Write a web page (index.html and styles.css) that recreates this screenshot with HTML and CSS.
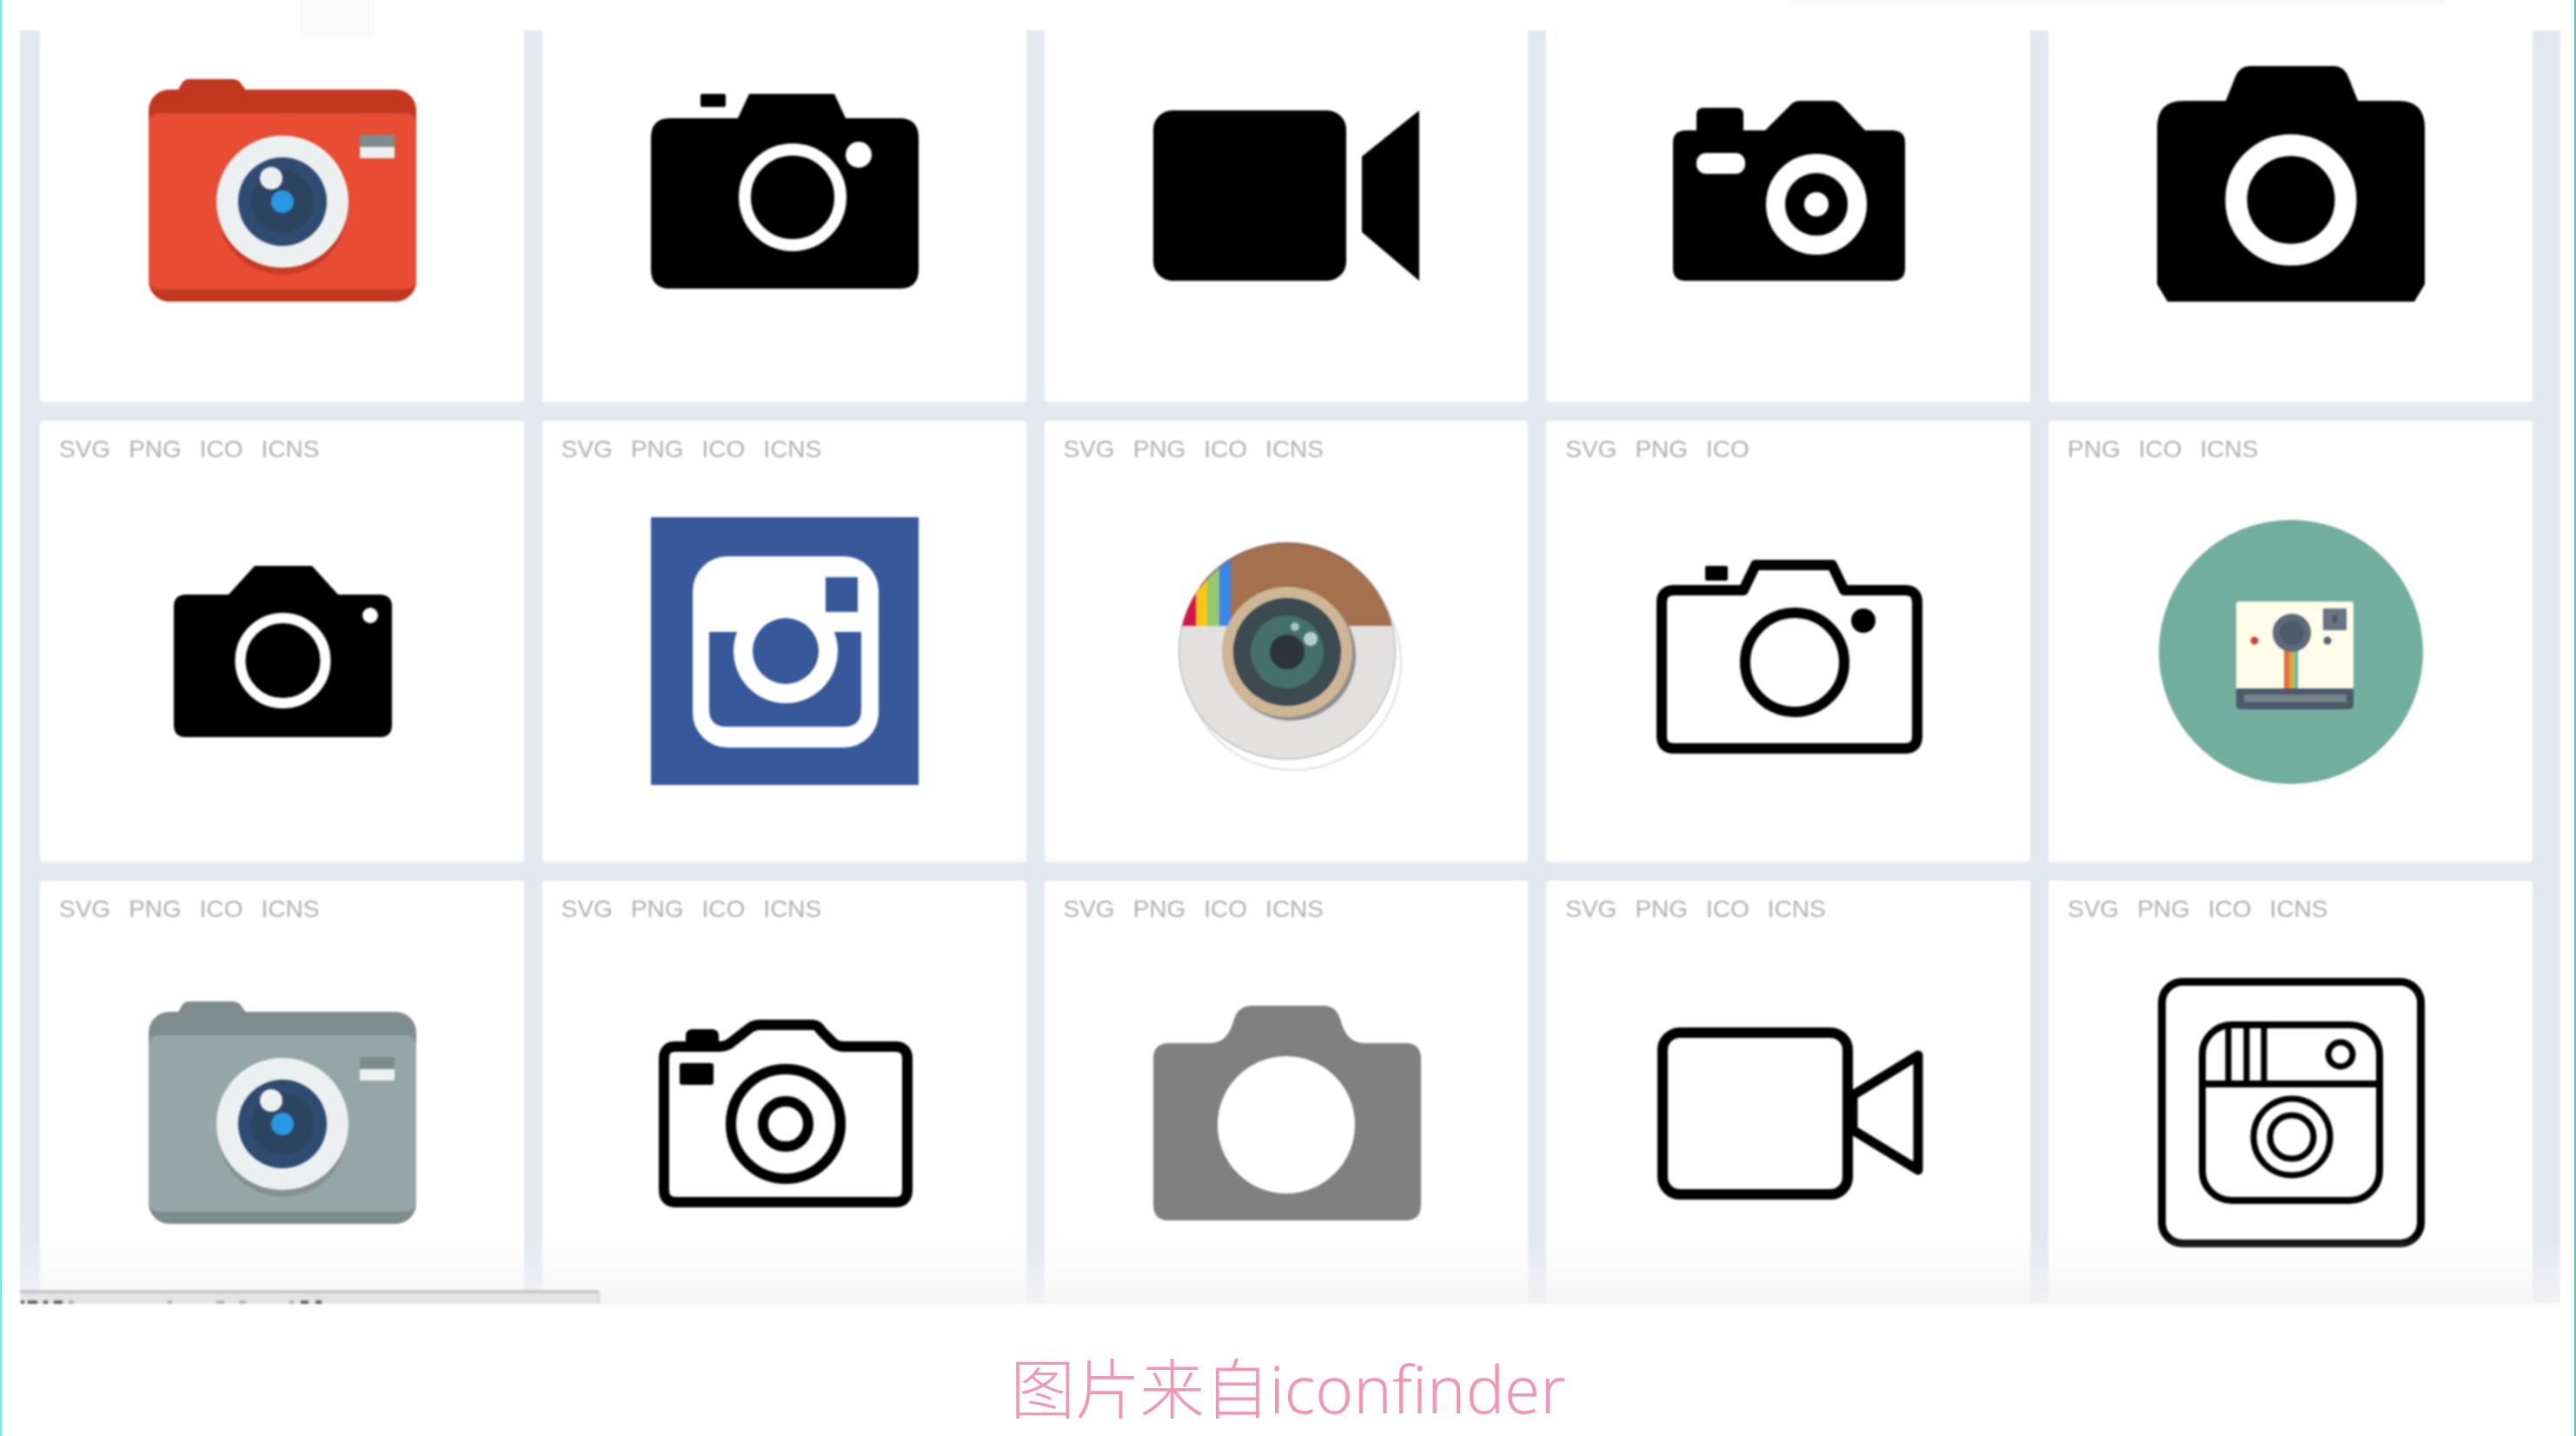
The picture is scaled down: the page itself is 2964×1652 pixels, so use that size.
FILE: index.html
```html
<!DOCTYPE html>
<html lang="zh">
<head>
<meta charset="utf-8">
<title>iconfinder</title>
<link rel="stylesheet" href="styles.css">
</head>
<body>
<div class="page">
  <div class="top-strip"><span class="ghost-tab"></span><span class="ghost-bar"></span></div>
  <div class="sheet">
    <div class="grid">

      <div class="card card--top">
        <svg class="icon" viewBox="0 0 308 308">
          <path d="M30 44 38 29Q41 24 47 24H96Q104 24 107 30L113 38V44Z" fill="#c2371f"/>
          <rect x="0" y="36" width="308" height="244" rx="24" fill="#c2371f"/>
          <rect x="0" y="63" width="308" height="203" rx="12" fill="#e84c33"/>
          <circle cx="154" cy="175" r="74" fill="#c63c26"/>
          <circle cx="154" cy="165" r="76" fill="#ecf0f1"/>
          <circle cx="154" cy="165" r="51" fill="#2f4b70"/>
          <circle cx="154" cy="165" r="36" fill="#2c4460"/>
          <circle cx="154" cy="165" r="13" fill="#2a97e2"/>
          <circle cx="141" cy="138" r="13" fill="#ecf0f1"/>
          <rect x="243" y="88" width="40" height="14" fill="#7f8c8d"/>
          <rect x="243" y="102" width="40" height="13" fill="#ecf0f1"/>
        </svg>
      </div>

      <div class="card card--top">
        <svg class="icon" viewBox="0 0 308 308">
          <path d="M113 41H211L224 69H286Q308 69 308 92V243Q308 265 286 265H22Q0 265 0 243V92Q0 69 22 69H100Z" fill="#000"/>
          <rect x="57" y="41" width="29" height="15" rx="2" fill="#000"/>
          <circle cx="163" cy="160" r="55" fill="none" stroke="#fff" stroke-width="14"/>
          <circle cx="239" cy="111" r="15" fill="#fff"/>
        </svg>
      </div>

      <div class="card card--top">
        <svg class="icon" viewBox="0 0 308 308">
          <rect x="0" y="60" width="222" height="196" rx="22" fill="#000"/>
          <path d="M306 60V256L240 200V113Z" fill="#000"/>
        </svg>
      </div>

      <div class="card card--top">
        <svg class="icon" viewBox="0 0 308 308">
          <path d="M47 65Q47 57 55 57H93Q101 57 101 65V83H126L156 53Q160 49 166 49H203Q209 49 213 53L241 83H272Q287 83 287 97V242Q287 256 272 256H35Q20 256 20 242V97Q20 83 35 83H47Z" fill="#000"/>
          <rect x="47" y="109" width="56" height="24" rx="11" fill="#fff"/>
          <circle cx="185" cy="168" r="47" fill="none" stroke="#fff" stroke-width="22"/>
          <circle cx="185" cy="168" r="14" fill="#fff"/>
        </svg>
      </div>

      <div class="card card--top">
        <svg class="icon" viewBox="0 0 308 308">
          <path d="M107 9H203Q216 9 221 24L231 49H278Q308 49 308 80V260L296 280H12L0 260V80Q0 49 30 49H79L89 24Q94 9 107 9Z" fill="#000"/>
          <circle cx="154" cy="163" r="63" fill="none" stroke="#fff" stroke-width="25"/>
        </svg>
      </div>

      <div class="card">
        <div class="formats"><span>SVG</span><span>PNG</span><span>ICO</span><span>ICNS</span></div>
        <svg class="icon" viewBox="0 0 308 308">
          <path d="M122 56H188L218 89H266Q280 89 280 103V239Q280 253 266 253H43Q29 253 29 239V103Q29 89 43 89H92Z" fill="#000"/>
          <circle cx="154.500" cy="165" r="49" fill="none" stroke="#fff" stroke-width="12"/>
          <circle cx="255" cy="113" r="9" fill="#fff"/>
        </svg>
      </div>

      <div class="card">
        <div class="formats"><span>SVG</span><span>PNG</span><span>ICO</span><span>ICNS</span></div>
        <svg class="icon" viewBox="0 0 308 308">
          <rect width="308" height="308" fill="#37589b"/>
          <rect x="48" y="45" width="214" height="220" rx="40" fill="#fff"/>
          <path d="M67 132H242V221Q242 241 222 241H87Q67 241 67 221Z" fill="#37589b"/>
          <rect x="201" y="69" width="37" height="40" fill="#37589b"/>
          <circle cx="155" cy="154" r="60" fill="#fff"/>
          <circle cx="155" cy="154" r="38" fill="#37589b"/>
        </svg>
      </div>

      <div class="card">
        <div class="formats"><span>SVG</span><span>PNG</span><span>ICO</span><span>ICNS</span></div>
        <svg class="icon" viewBox="0 0 308 308">
          <defs>
            <clipPath id="insta-disc"><circle cx="154" cy="154" r="124"/></clipPath>
          </defs>
          <circle cx="161" cy="167" r="124" fill="#fff" stroke="#dedede" stroke-width="2"/>
          <circle cx="154" cy="154" r="125" fill="#a8a8a8"/>
          <g clip-path="url(#insta-disc)">
            <rect x="30" y="30" width="248" height="95" fill="#a4704e"/>
            <rect x="30" y="30" width="19" height="95" fill="#d8124e"/>
            <rect x="49" y="30" width="13" height="95" fill="#fcc414"/>
            <rect x="62" y="30" width="14" height="95" fill="#94c96f"/>
            <rect x="76" y="30" width="13" height="95" fill="#3b86ec"/>
            <rect x="30" y="125" width="248" height="153" fill="#e2e1df"/>
          </g>
          <path d="M54 80A124 124 0 0 1 230 56" fill="none" stroke="#7d5238" stroke-width="2" opacity="0.6"/>
          <circle cx="158" cy="159" r="75" fill="#8e8e8e"/>
          <circle cx="154" cy="155" r="75" fill="#cdb595"/>
          <circle cx="154" cy="155" r="62" fill="#3c4a52"/>
          <circle cx="154" cy="155" r="42" fill="#45706e"/>
          <circle cx="154" cy="155" r="20" fill="#2b343b"/>
          <circle cx="163" cy="126" r="5" fill="#a9c4c0"/>
          <circle cx="181" cy="140" r="8" fill="#b5cfcb"/>
        </svg>
      </div>

      <div class="card">
        <div class="formats"><span>SVG</span><span>PNG</span><span>ICO</span></div>
        <svg class="icon" viewBox="0 0 308 308">
          <path d="M115 55H203L217 84H287Q301 84 301 98V252Q301 266 287 266H21Q7 266 7 252V98Q7 84 21 84H101Z" fill="none" stroke="#000" stroke-width="12" stroke-linejoin="round"/>
          <rect x="57" y="56" width="26" height="17" rx="2" fill="#000"/>
          <circle cx="160" cy="167" r="57" fill="none" stroke="#000" stroke-width="12"/>
          <circle cx="239" cy="119" r="14" fill="#000"/>
        </svg>
      </div>

      <div class="card">
        <div class="formats"><span>PNG</span><span>ICO</span><span>ICNS</span></div>
        <svg class="icon" viewBox="0 0 308 308">
          <circle cx="154" cy="155" r="152" fill="#72ae9d"/>
          <path d="M91 100Q91 97 94 97H223Q226 97 226 100V197H91Z" fill="#fdfce8"/>
          <path d="M91 197H226V216Q226 221 221 221H96Q91 221 91 216Z" fill="#4d5869"/>
          <rect x="100" y="204" width="118" height="9" fill="#76838a"/>
          <rect x="146" y="150" width="6" height="47" fill="#e0704a"/>
          <rect x="152" y="150" width="4" height="47" fill="#e8a030"/>
          <rect x="156" y="150" width="3" height="47" fill="#a9c060"/>
          <rect x="159" y="150" width="3" height="47" fill="#5fb0b0"/>
          <circle cx="155" cy="133" r="22" fill="#5c6b7a"/>
          <circle cx="155" cy="133" r="14" fill="#4d5a6c"/>
          <rect x="191" y="105" width="27" height="25" fill="#6a7480"/>
          <rect x="202" y="113" width="5" height="8" fill="#49525f"/>
          <circle cx="112" cy="142" r="4.500" fill="#c9432e"/>
          <circle cx="196" cy="142" r="4.500" fill="#55607a"/>
        </svg>
      </div>

      <div class="card">
        <div class="formats"><span>SVG</span><span>PNG</span><span>ICO</span><span>ICNS</span></div>
        <svg class="icon" viewBox="0 0 308 308">
          <path d="M30 48 38 33Q41 28 47 28H96Q104 28 107 34L113 42V48Z" fill="#7f8c8d"/>
          <rect x="0" y="40" width="308" height="244" rx="24" fill="#7f8c8d"/>
          <rect x="0" y="67" width="308" height="203" rx="12" fill="#96a6a6"/>
          <circle cx="154" cy="179" r="74" fill="#84918f"/>
          <circle cx="154" cy="169" r="76" fill="#ecf0f1"/>
          <circle cx="154" cy="169" r="51" fill="#2f4b70"/>
          <circle cx="154" cy="169" r="36" fill="#2c4460"/>
          <circle cx="154" cy="169" r="13" fill="#2a97e2"/>
          <circle cx="141" cy="142" r="13" fill="#ecf0f1"/>
          <rect x="243" y="92" width="40" height="14" fill="#7f8c8d"/>
          <rect x="243" y="106" width="40" height="13" fill="#ecf0f1"/>
        </svg>
      </div>

      <div class="card">
        <div class="formats"><span>SVG</span><span>PNG</span><span>ICO</span><span>ICNS</span></div>
        <svg class="icon" viewBox="0 0 308 308">
          <path d="M28 80H78Q88 80 94 74L112 60Q118 55 125 55H186Q192 55 196 62L209 75Q214 80 222 80H281Q295 80 295 94V245Q295 259 281 259H29Q15 259 15 245V94Q15 80 28 80Z" fill="none" stroke="#000" stroke-width="12" stroke-linejoin="round"/>
          <path d="M40 80V68Q40 60 48 60H70Q78 60 78 68V80Z" fill="#000"/>
          <rect x="33" y="99" width="39" height="25" rx="3" fill="#000"/>
          <circle cx="155" cy="169" r="63" fill="none" stroke="#000" stroke-width="12"/>
          <circle cx="155" cy="169" r="26" fill="none" stroke="#000" stroke-width="12"/>
        </svg>
      </div>

      <div class="card">
        <div class="formats"><span>SVG</span><span>PNG</span><span>ICO</span><span>ICNS</span></div>
        <svg class="icon" viewBox="0 0 308 308">
          <path d="M114 33H196Q210 33 215 48Q222 76 242 76H290Q308 76 308 94V262Q308 280 290 280H18Q0 280 0 262V94Q0 76 18 76H66Q86 76 93 48Q98 33 114 33Z" fill="#808080"/>
          <circle cx="153" cy="170" r="79" fill="#fff"/>
        </svg>
      </div>

      <div class="card">
        <div class="formats"><span>SVG</span><span>PNG</span><span>ICO</span><span>ICNS</span></div>
        <svg class="icon" viewBox="0 0 308 308">
          <rect x="8" y="64" width="213" height="186" rx="20" fill="none" stroke="#000" stroke-width="12"/>
          <path d="M302 90V222L227 176V136Z" fill="none" stroke="#000" stroke-width="11" stroke-linejoin="round"/>
        </svg>
      </div>

      <div class="card">
        <div class="formats"><span>SVG</span><span>PNG</span><span>ICO</span><span>ICNS</span></div>
        <svg class="icon" viewBox="0 0 308 308">
          <rect x="5.500" y="5.500" width="298" height="301" rx="24" fill="none" stroke="#000" stroke-width="9"/>
          <rect x="52" y="55" width="204" height="202" rx="34" fill="none" stroke="#000" stroke-width="8"/>
          <path d="M52 123H256" fill="none" stroke="#000" stroke-width="8"/>
          <path d="M82 55V123M103 55V123M123 55V123" fill="none" stroke="#000" stroke-width="7"/>
          <circle cx="211" cy="89" r="14" fill="none" stroke="#000" stroke-width="7"/>
          <circle cx="155" cy="184" r="44" fill="none" stroke="#000" stroke-width="7"/>
          <circle cx="155" cy="184" r="25" fill="none" stroke="#000" stroke-width="7"/>
        </svg>
      </div>

    </div>
    <div class="fade"></div>
    <div class="status">
      <svg class="status-marks" width="380" height="4" viewBox="0 0 380 4">
        <path d="M1 0H5V4H1ZM9 0H20V4H9ZM27 0H32V4H27ZM39 0H49V4H39ZM323 0H332V4H323ZM340 0H347V4H340Z" fill="#666"/>
        <path d="M56 0H62V4H56ZM169 0H175V4H169ZM226 0H235V4H226ZM252 0H260V4H252ZM310 0H315V4H310Z" fill="#b4b4b4"/>
      </svg>
    </div>
  </div>
  <div class="caption">图片来自iconfinder</div>
</div>
</body>
</html>
```

FILE: styles.css
```css
* {
  box-sizing: border-box;
}

html,
body {
  margin: 0;
  padding: 0;
  background: #fff;
}

.page {
  position: relative;
  width: 2964px;
  height: 1652px;
  display: flex;
  flex-direction: column;
  overflow: hidden;
  border-left: 2px solid #63f3f3;
  border-right: 2px solid #58c8b8;
}

.top-strip {
  height: 35px;
  flex: none;
}

.ghost-tab {
  position: absolute;
  left: 343px;
  top: 0;
  width: 86px;
  height: 45px;
  background: #fafafa;
  border-radius: 0 0 8px 8px;
  z-index: 2;
}

.ghost-bar {
  position: absolute;
  left: 2058px;
  top: 0;
  width: 754px;
  height: 4px;
  background: #f8f8f8;
}

.sheet {
  position: relative;
  flex: none;
  width: 2923px;
  height: 1465px;
  margin-left: 21px;
  padding-left: 23px;
  background: #e3e8f1;
  overflow: hidden;
  filter: blur(1.1px);
}

.grid {
  display: grid;
  grid-template-columns: repeat(5, 556.75px);
  grid-template-rows: 428px 508px 508px;
  gap: 21px;
}

.card {
  display: flex;
  flex-direction: column;
  padding-left: 2px;
  background: #fff;
  border-radius: 4px;
  box-shadow: inset 0 -2px 0 #f7f8fa;
}

.card--top {
  padding-top: 32px;
  border-radius: 0 0 4px 4px;
}

.formats {
  display: flex;
  gap: 21px;
  height: 49px;
  padding: 17px 0 0 20px;
  margin-bottom: 62px;
  font-family: "Liberation Sans", Arial, sans-serif;
  font-size: 28px;
  line-height: 32px;
  color: #aeafb2;
}

.icon {
  display: block;
  flex: none;
  width: 308px;
  height: 308px;
  margin: 0 auto;
  overflow: visible;
}

.fade {
  position: absolute;
  left: 0;
  right: 0;
  bottom: 0;
  height: 80px;
  background: linear-gradient(to bottom, rgba(244, 244, 246, 0), rgba(244, 244, 246, 0.8));
}

.status {
  position: absolute;
  left: 0;
  bottom: 0;
  width: 667px;
  height: 16px;
  display: flex;
  align-items: flex-end;
  background: #e4e4e4;
  border-top: 4px solid #c9c9c9;
  border-right: 2px solid #d4d4d4;
  border-top-right-radius: 3px;
}

.status-marks {
  display: block;
}

.caption {
  flex: 1;
  display: flex;
  align-items: center;
  justify-content: center;
  padding-top: 42px;
  font-family: "Noto Sans", "Noto Sans CJK SC", sans-serif;
  font-size: 74.500px;
  font-weight: 300;
  line-height: 1;
  color: #f595b2;
  filter: blur(0.6px);
}
```
